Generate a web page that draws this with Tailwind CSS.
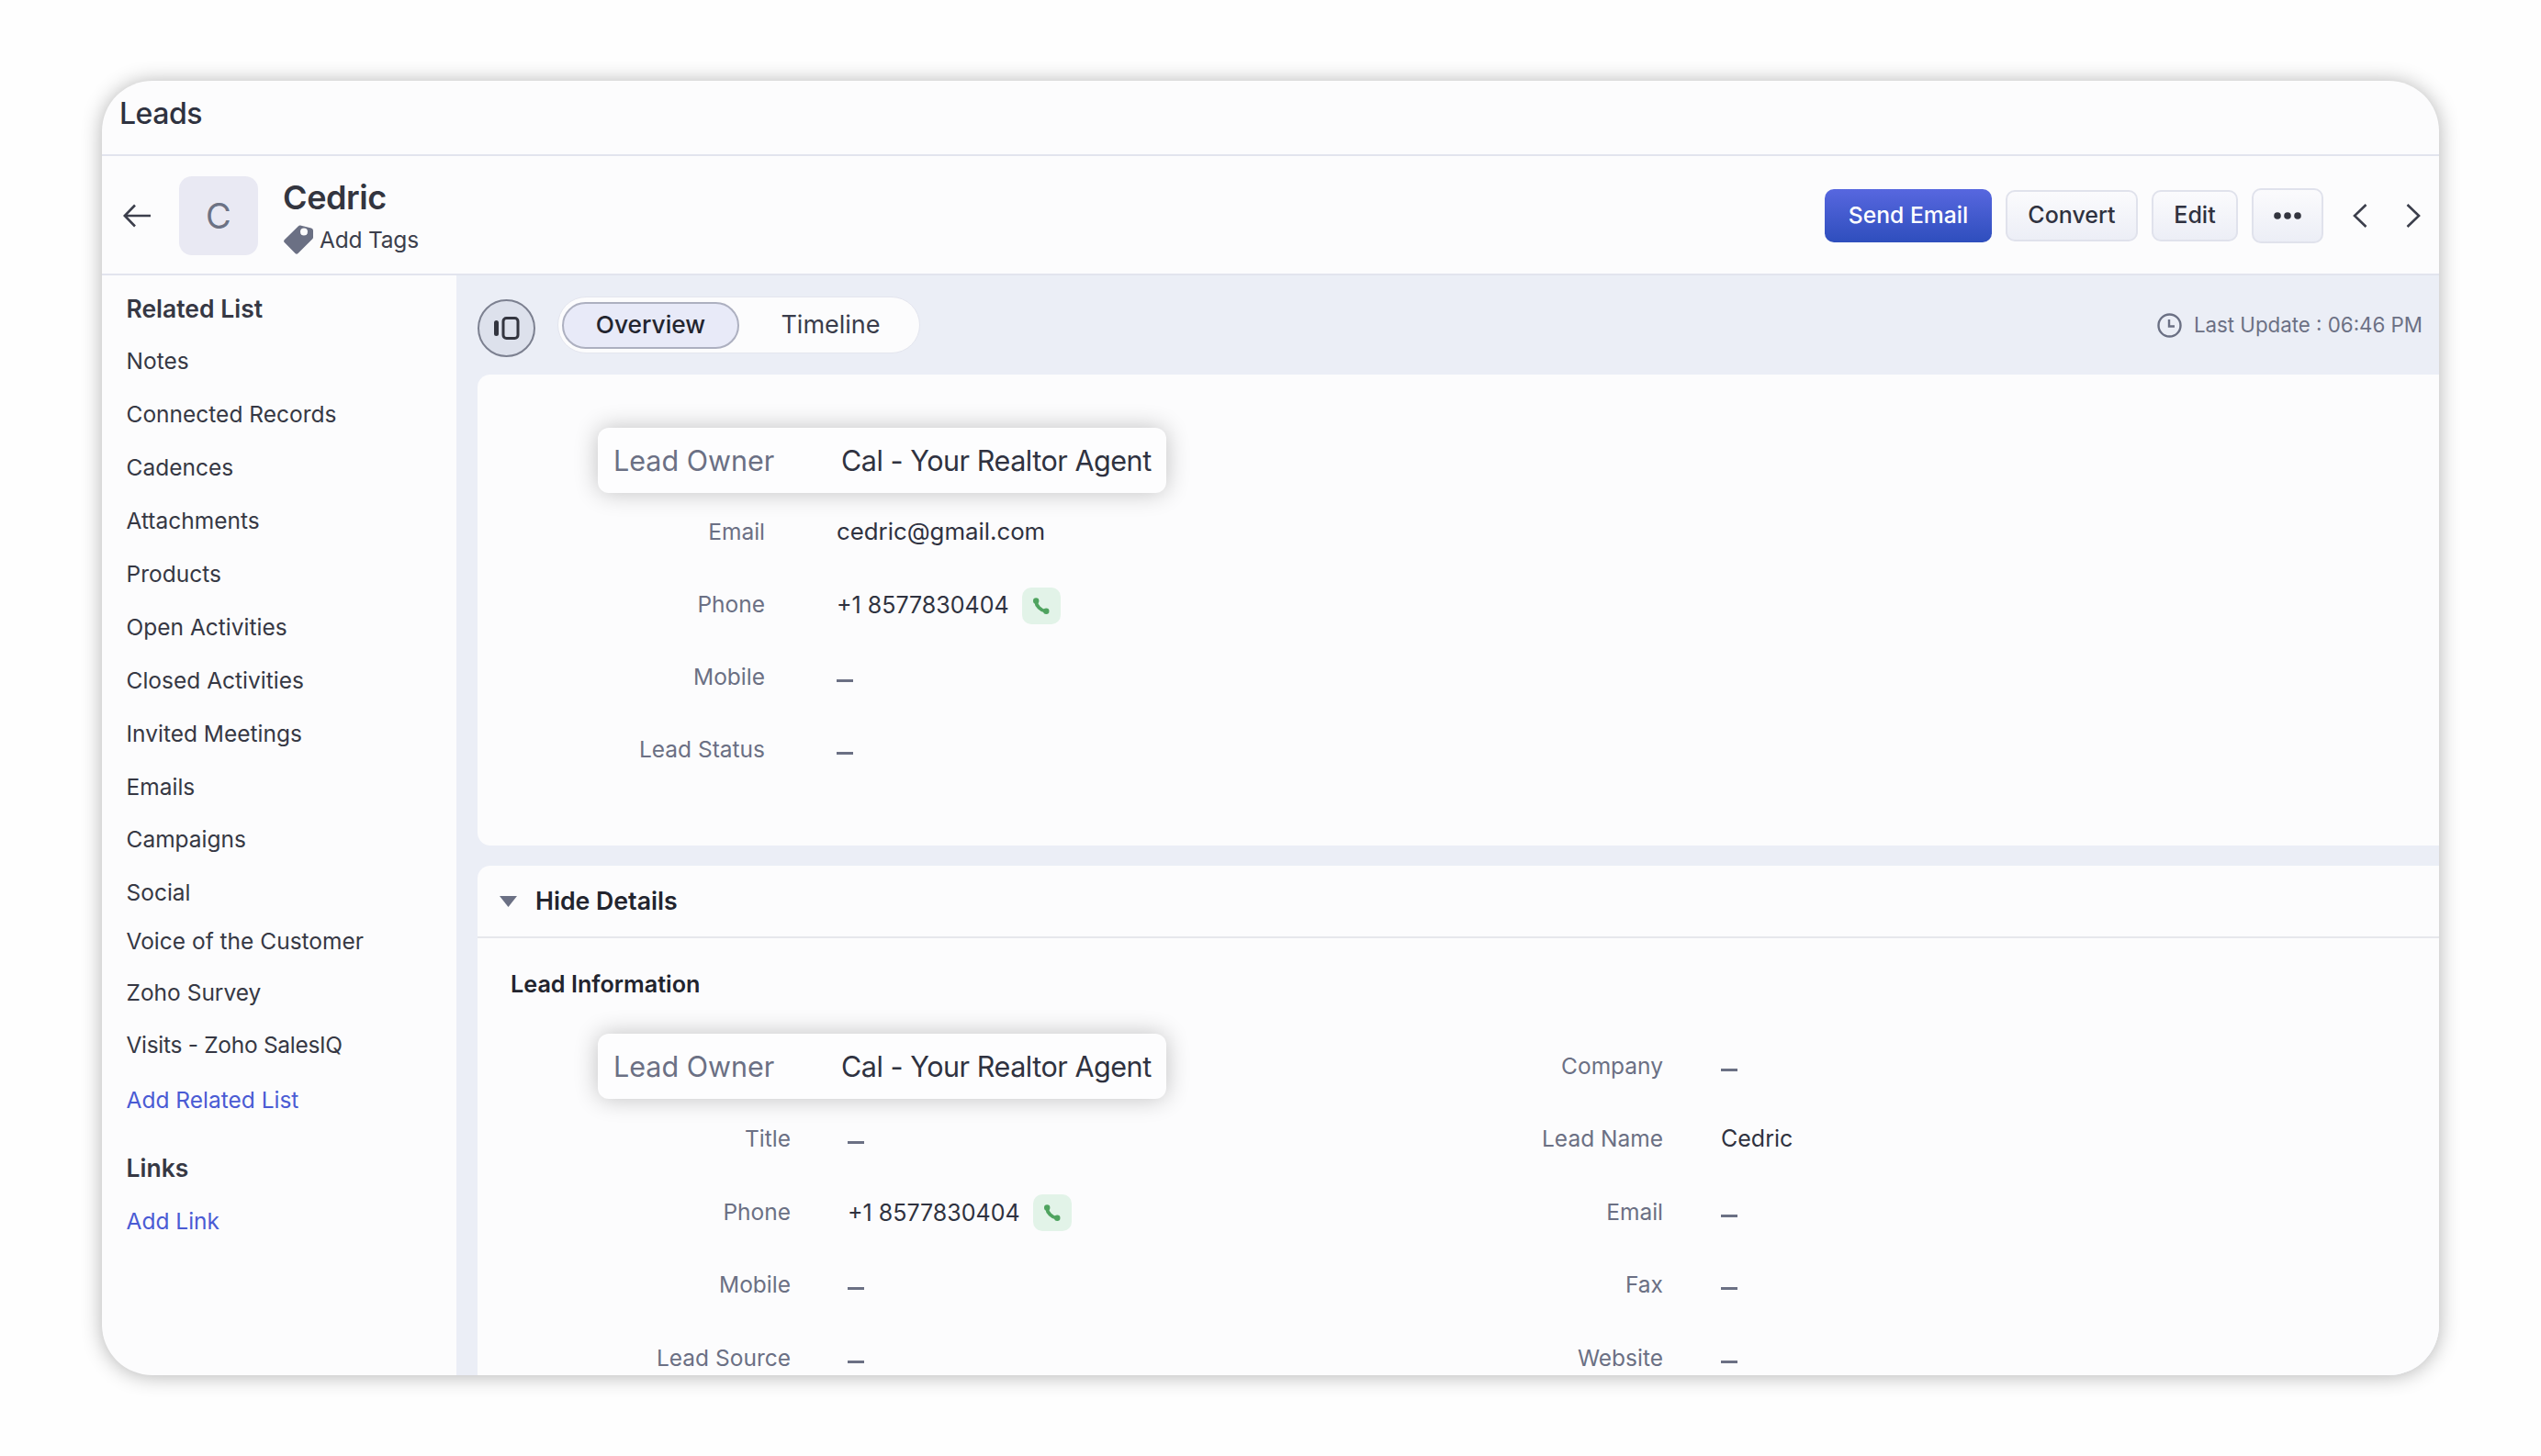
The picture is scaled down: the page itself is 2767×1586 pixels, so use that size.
<!DOCTYPE html>
<html>
<head>
    <meta charset="utf-8">
    <title>Leads</title>
    <script src="https://cdn.jsdelivr.net/npm/@tailwindcss/browser@4"></script>
</head>
<body class="bg-[#fefefe] font-[Inter,sans-serif] text-[#2f3240]">
    <div class="w-[2767px] h-[1586px] pt-[88px] pl-[111px] overflow-hidden">
        <div class="w-[2545px] h-[1410px] bg-[#fcfcfd] rounded-[55px] shadow-[0_1px_22px_rgba(0,0,0,0.3)] overflow-hidden flex flex-col">
            <!-- Module title -->
            <div class="h-[82px] shrink-0 border-b-2 border-[#e2e4ee] pl-[19px] pt-[16px] text-[32px] leading-[40px] tracking-[-0.5px] font-medium">Leads</div>

            <!-- Record header -->
            <div class="h-[130px] shrink-0 border-b-2 border-[#e2e4ee] flex items-center pl-[23px] pr-[20px] pt-[2px]">
                <svg class="w-[30px] h-[26px]" viewBox="0 0 30 26" fill="none" stroke="#3c3f4c" stroke-width="2.6"><path d="M30 13H2M13 1.5 1.8 13 13 24.5"/></svg>
                <div class="w-[86px] h-[86px] ml-[31px] rounded-[14px] bg-[#e9e9f3] flex items-center justify-center text-[38px] text-[#6c7284]">C</div>
                <div class="ml-[27px]">
                    <div class="text-[36px] leading-[42px] font-semibold tracking-[-0.4px] text-[#33353f]">Cedric</div>
                    <div class="flex items-center mt-[9px]">
                        <svg class="w-[32px] h-[32px] ml-[1px]" viewBox="0 0 32 32"><path fill="#6b7084" fill-rule="evenodd" d="M18 .6 30 3.5q2 .5 2 2.5v7.5q0 1-.7 1.8L15.500 31q-1.500 1.500-3 0L.7 19q-1.200-1.400 0-2.700L16 1.200q1-.9 2-.6ZM22 3.500a4 4 0 1 0 0 8 4 4 0 0 0 0-8Z"/></svg>
                        <span class="ml-[7px] text-[24.500px] leading-[30px] tracking-[-0.2px] text-[#3c3f4c]">Add Tags</span>
                    </div>
                </div>
                <div class="ml-auto flex items-center">
                    <button class="w-[182px] h-[58px] rounded-[10px] bg-gradient-to-b from-[#5767df] to-[#2e4ebd] text-white text-[24.700px] font-medium">Send Email</button>
                    <button class="w-[144px] h-[56px] ml-[15px] rounded-[10px] border-2 border-[#e0e2ec] bg-gradient-to-b from-[#fbfbfd] to-[#eceef6] text-[25px] font-medium">Convert</button>
                    <button class="w-[94px] h-[56px] ml-[15px] rounded-[10px] border-2 border-[#e0e2ec] bg-gradient-to-b from-[#fbfbfd] to-[#eceef6] text-[25px] font-medium">Edit</button>
                    <button class="w-[78px] h-[60px] ml-[15px] rounded-[10px] border-2 border-[#e0e2ec] bg-gradient-to-b from-[#fbfbfd] to-[#eceef6] flex items-center justify-center">
                        <svg class="w-[30px] h-[8px]" viewBox="0 0 30 8" fill="#33353f"><circle cx="4" cy="4" r="3.8"/><circle cx="15" cy="4" r="3.8"/><circle cx="26" cy="4" r="3.8"/></svg>
                    </button>
                    <svg class="w-[16px] h-[26px] ml-[32px]" viewBox="0 0 16 26" fill="none" stroke="#3c3f4c" stroke-width="2.6"><path d="M14.500 1 2 13l12.500 12"/></svg>
                    <svg class="w-[16px] h-[26px] ml-[42px]" viewBox="0 0 16 26" fill="none" stroke="#3c3f4c" stroke-width="2.6"><path d="M1.500 1 14 13 1.500 25"/></svg>
                </div>
            </div>

            <div class="flex flex-1 min-h-0">
                <!-- Related list sidebar -->
                <div class="w-[386px] shrink-0 pl-[26.500px] pt-[8px] text-[24.500px] text-[#363844]">
                    <div class="h-[58px] flex items-center font-semibold text-[26.500px]">Related List</div>
                    <div class="h-[58px] -mt-[2px] flex items-center">Notes</div>
                    <div class="h-[58px] flex items-center">Connected Records</div>
                    <div class="h-[58px] flex items-center">Cadences</div>
                    <div class="h-[58px] flex items-center">Attachments</div>
                    <div class="h-[58px] flex items-center">Products</div>
                    <div class="h-[58px] flex items-center">Open Activities</div>
                    <div class="h-[58px] flex items-center">Closed Activities</div>
                    <div class="h-[58px] flex items-center">Invited Meetings</div>
                    <div class="h-[58px] flex items-center">Emails</div>
                    <div class="h-[58px] -mt-[1px] flex items-center">Campaigns</div>
                    <div class="h-[58px] flex items-center">Social</div>
                    <div class="h-[58px] -mt-[5px] flex items-center">Voice of the Customer</div>
                    <div class="h-[58px] -mt-[1.500px] flex items-center">Zoho Survey</div>
                    <div class="h-[58px] -mt-[1.500px] flex items-center tracking-[-0.3px]">Visits - Zoho SalesIQ</div>
                    <div class="h-[58px] mt-[2.500px] flex items-center text-[#4a5bd4]">Add Related List</div>
                    <div class="h-[58px] mt-[16.500px] flex items-center font-semibold text-[26.500px]">Links</div>
                    <div class="h-[58px] -mt-[1px] flex items-center text-[#4a5bd4]">Add Link</div>
                </div>

                <!-- Main content -->
                <div class="flex-1 min-w-0 bg-[#ebeef6] pl-[23px] overflow-hidden">
                    <div class="h-[108px] flex items-center">
                        <div class="w-[63px] h-[63px] mt-[6px] rounded-full bg-[#dde1ec] border-2 border-[#7c8090] flex items-center justify-center">
                            <svg class="w-[28px] h-[25px]" viewBox="0 0 28 25" fill="none"><rect x="0" y="4" width="5" height="17" rx="2.500" fill="#33353f"/><rect x="10" y="1.500" width="16" height="22" rx="3.500" stroke="#33353f" stroke-width="3"/></svg>
                        </div>
                        <div class="ml-[24px] w-[395px] h-[62px] bg-[#fcfcfd] border border-[#e3e5ee] rounded-full flex items-center pl-[4px]">
                            <div class="w-[193px] h-[51px] rounded-full bg-[#e8eaf8] border-2 border-[#adb0c0] flex items-center justify-center text-[26.300px] font-medium text-[#23252f]">Overview</div>
                            <div class="w-[195px] pl-[4px] text-center text-[27px] text-[#3a3d4b]">Timeline</div>
                        </div>
                        <div class="ml-auto pr-[18px] flex items-center text-[22.300px] text-[#6b7084]">
                            <svg class="w-[27px] h-[27px]" viewBox="0 0 27 27" fill="none" stroke="#6b7084" stroke-width="2.400"><circle cx="13.500" cy="13.500" r="12"/><path d="M13 7v7.500h6"/></svg>
                            <span class="ml-[13px]">Last Update : 06:46 PM</span>
                        </div>
                    </div>

                    <!-- Summary card -->
                    <div class="h-[513px] bg-[#fcfcfd] rounded-tl-[14px] rounded-bl-[14px] pt-[58px]">
                        <div class="ml-[131px] w-[619px] h-[71px] bg-[#fdfdfe] rounded-[12px] shadow-[0_0_26px_rgba(0,0,0,0.24)] flex items-center pl-[17px] text-[30.500px] whitespace-nowrap">
                            <span class="w-[248px] text-[#6b7084]">Lead Owner</span>
                            <span class="tracking-[-0.45px]">Cal - Your Realtor Agent</span>
                        </div>
                        <div class="mt-[3px] text-[24.500px]">
                            <div class="h-[79px] flex items-center">
                                <span class="w-[313px] text-right text-[#6b7084]">Email</span>
                                <span class="ml-[78px] text-[25.800px]">cedric@gmail.com</span>
                            </div>
                            <div class="h-[79px] flex items-center">
                                <span class="w-[313px] text-right text-[#6b7084]">Phone</span>
                                <span class="ml-[78px] mt-[2px] text-[25px]">+1 8577830404</span>
                                <span class="ml-[14px] mt-[2px] w-[42px] h-[40px] rounded-[10px] bg-[#e2f3e8] flex items-center justify-center">
                                    <svg class="w-[18px] h-[18px]" viewBox="0 0 18 18" fill="#4fa35f"><path d="M3 4C3.500 9 8 14 14 15" fill="none" stroke="#4fa35f" stroke-width="3.800"/><circle cx="3.200" cy="3.500" r="3.200"/><circle cx="14.300" cy="14.800" r="3.200"/></svg>
                                </span>
                            </div>
                            <div class="h-[79px] flex items-center">
                                <span class="w-[313px] text-right text-[#6b7084]">Mobile</span>
                                <span class="ml-[78px] w-[18px] h-[3px] mt-[8px] bg-[#6b7084]"></span>
                            </div>
                            <div class="h-[79px] flex items-center">
                                <span class="w-[313px] text-right text-[#6b7084]">Lead Status</span>
                                <span class="ml-[78px] w-[18px] h-[3px] mt-[8px] bg-[#6b7084]"></span>
                            </div>
                        </div>
                    </div>

                    <!-- Details card -->
                    <div class="mt-[22px] bg-[#fcfcfd] rounded-tl-[14px] h-[600px]">
                        <div class="h-[79px] border-b-2 border-[#e6e7ec] flex items-center pl-[24px]">
                            <svg class="w-[19px] h-[12px]" viewBox="0 0 19 12" fill="#6b7084"><path d="M0 0h19l-9.500 12Z"/></svg>
                            <span class="ml-[20px] text-[26.700px] font-semibold text-[#22242e]">Hide Details</span>
                        </div>
                        <div class="pl-[36px] pt-[36px] h-[65px] leading-[28px] text-[25.200px] font-semibold text-[#22242e]">Lead Information</div>
                        <div class="flex mt-[35px] text-[24.500px]">
                            <div class="w-[1016px] shrink-0">
                                <div class="h-[79px] flex items-center">
                                    <div class="ml-[131px] w-[619px] h-[71px] bg-[#fdfdfe] rounded-[12px] shadow-[0_0_26px_rgba(0,0,0,0.24)] flex items-center pl-[17px] text-[30.500px] whitespace-nowrap">
                                        <span class="w-[248px] text-[#6b7084]">Lead Owner</span>
                                        <span class="tracking-[-0.45px]">Cal - Your Realtor Agent</span>
                                    </div>
                                </div>
                                <div class="h-[79.500px] flex items-center">
                                    <span class="w-[341px] text-right text-[#6b7084]">Title</span>
                                    <span class="ml-[62px] w-[18px] h-[3px] mt-[8px] bg-[#6b7084]"></span>
                                </div>
                                <div class="h-[79.500px] flex items-center">
                                    <span class="w-[341px] text-right text-[#6b7084]">Phone</span>
                                    <span class="ml-[62px] mt-[2px] text-[25px]">+1 8577830404</span>
                                    <span class="ml-[14px] mt-[2px] w-[42px] h-[40px] rounded-[10px] bg-[#e2f3e8] flex items-center justify-center">
                                        <svg class="w-[18px] h-[18px]" viewBox="0 0 18 18" fill="#4fa35f"><path d="M3 4C3.500 9 8 14 14 15" fill="none" stroke="#4fa35f" stroke-width="3.800"/><circle cx="3.200" cy="3.500" r="3.200"/><circle cx="14.300" cy="14.800" r="3.200"/></svg>
                                    </span>
                                </div>
                                <div class="h-[79.500px] flex items-center">
                                    <span class="w-[341px] text-right text-[#6b7084]">Mobile</span>
                                    <span class="ml-[62px] w-[18px] h-[3px] mt-[8px] bg-[#6b7084]"></span>
                                </div>
                                <div class="h-[79.500px] flex items-center">
                                    <span class="w-[341px] text-right text-[#6b7084]">Lead Source</span>
                                    <span class="ml-[62px] w-[18px] h-[3px] mt-[8px] bg-[#6b7084]"></span>
                                </div>
                            </div>
                            <div class="flex-1">
                                <div class="h-[79px] flex items-center">
                                    <span class="w-[275px] text-right text-[#6b7084]">Company</span>
                                    <span class="ml-[63px] w-[18px] h-[3px] mt-[8px] bg-[#6b7084]"></span>
                                </div>
                                <div class="h-[79.500px] flex items-center">
                                    <span class="w-[275px] text-right text-[#6b7084]">Lead Name</span>
                                    <span class="ml-[63px] text-[25px]">Cedric</span>
                                </div>
                                <div class="h-[79.500px] flex items-center">
                                    <span class="w-[275px] text-right text-[#6b7084]">Email</span>
                                    <span class="ml-[63px] w-[18px] h-[3px] mt-[8px] bg-[#6b7084]"></span>
                                </div>
                                <div class="h-[79.500px] flex items-center">
                                    <span class="w-[275px] text-right text-[#6b7084]">Fax</span>
                                    <span class="ml-[63px] w-[18px] h-[3px] mt-[8px] bg-[#6b7084]"></span>
                                </div>
                                <div class="h-[79.500px] flex items-center">
                                    <span class="w-[275px] text-right text-[#6b7084]">Website</span>
                                    <span class="ml-[63px] w-[18px] h-[3px] mt-[8px] bg-[#6b7084]"></span>
                                </div>
                            </div>
                        </div>
                    </div>
                </div>
            </div>
        </div>
    </div>
</body>
</html>
